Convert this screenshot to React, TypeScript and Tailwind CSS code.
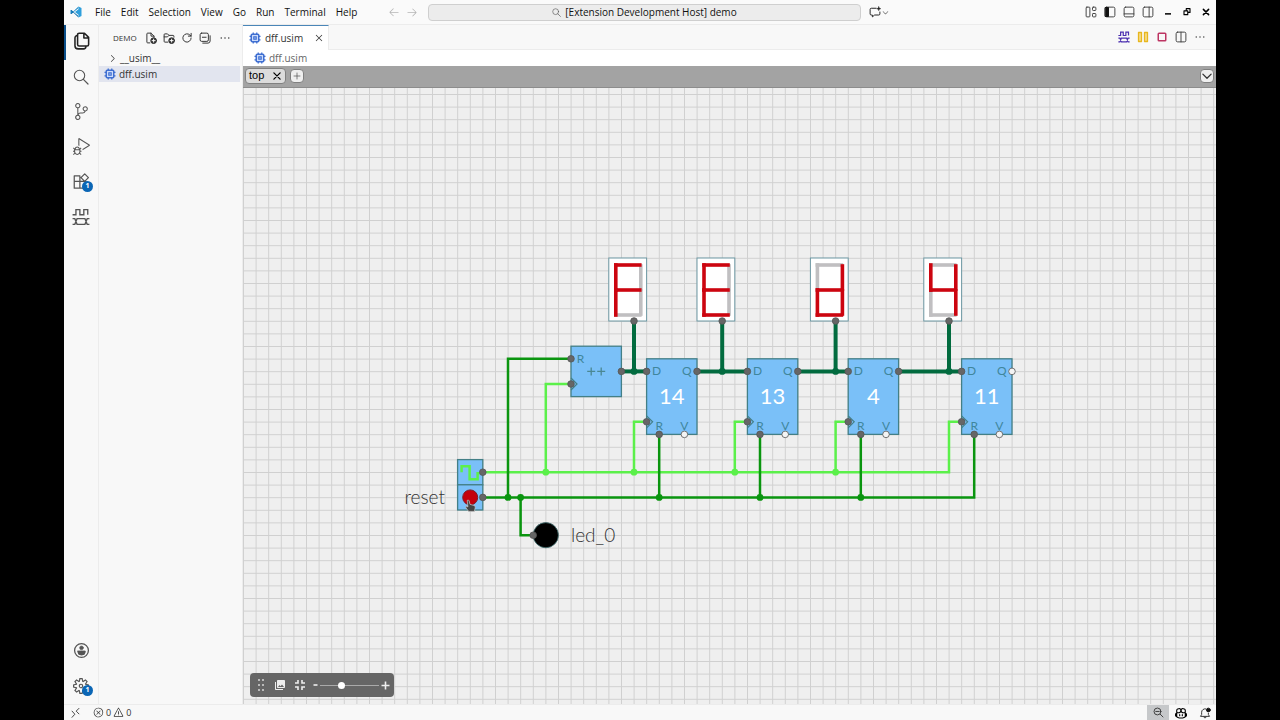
import type { ReactNode } from "react";
import {
  VscArrowLeft,
  VscArrowRight,
  VscChevronDown,
  VscChevronRight,
  VscClose,
  VscCopilot,
  VscDebugAlt,
  VscEllipsis,
  VscError,
  VscSettingsGear,
  VscSourceControl,
  VscWarning,
} from "react-icons/vsc";

const MENU = ["File", "Edit", "Selection", "View", "Go", "Run", "Terminal", "Help"];

function Icon({ size = 12, children }: { size?: number; children: ReactNode }) {
  return (
    <svg
      width={size}
      height={size}
      viewBox="0 0 16 16"
      fill="none"
      stroke="currentColor"
      strokeWidth="1.3"
      strokeLinecap="round"
      strokeLinejoin="round"
      className="shrink-0"
    >
      {children}
    </svg>
  );
}

function VsLogo() {
  return (
    <svg width="12" height="12" viewBox="0 0 24 24">
      <path d="M17 1 L6.5 11 L2.5 8 L1 9 L1 15 L2.5 16 L17 4 Z" fill="#1c88c7" />
      <path d="M17 23 L6.5 13 L2.5 16 L1 15 L4.5 12 L1 9 L2.5 8 L17 20 Z" fill="#0f6fae" />
      <path d="M17 1 L23 4 L23 20 L17 23 L17 17.5 L10 12 L17 6.500 Z" fill="#2f9fdc" />
    </svg>
  );
}

function ChipIcon() {
  return (
    <svg width="12" height="12" viewBox="0 0 24 24" fill="none" stroke="#3f6fd1" strokeWidth="3" className="shrink-0">
      <rect x="4.500" y="4.500" width="15" height="15" rx="2" fill="#cddcfb" />
      <rect x="9.500" y="9.500" width="5" height="5" fill="#8fb0f0" strokeWidth="2" />
      <path d="M8.500 1v3M15.500 1v3M8.500 20v3M15.500 20v3M1 8.500h3M1 15.500h3M20 8.500h3M20 15.500h3" strokeWidth="2.500" />
    </svg>
  );
}

function SearchIcon({ size }: { size: number }) {
  return (
    <Icon size={size}>
      <circle cx="6.500" cy="6.500" r="5.200" strokeWidth="1.100" />
      <path d="M10.400 10.400L15 15" strokeWidth="1.200" />
    </Icon>
  );
}

// two waveforms: a clock on top, a bus below
function WaveIcon({ size = 18, weight = 1.2 }: { size?: number; weight?: number }) {
  return (
    <svg width={size} height={size} viewBox="0 0 16 16" fill="none" stroke="currentColor" strokeWidth={weight}>
      <path d="M.5 6h3v-4.500h3.500v4.500h3.500v-4.500h3.500v4.500" />
      <path d="M.5 9.500h2l2 5h7l2-5h2M.5 14.500h2l2-5h7l2 5h2" />
    </svg>
  );
}

function TitleBar() {
  return (
    <header className="flex h-[25px] shrink-0 items-center border-b border-[#ececec] bg-[#fafafa]">
      <div className="flex flex-1 items-center pl-1.5">
        <VsLogo />
        <nav className="ml-2 flex">
          {MENU.map((label) => (
            <button key={label} className="px-[5px] text-[10px] leading-4 text-[#111]">
              {label}
            </button>
          ))}
        </nav>
      </div>
      <div className="flex items-center">
        <div className="flex w-10 gap-[6px] text-[#b5b5b5]">
          <button aria-label="Go back"><VscArrowLeft size={12} /></button>
          <button aria-label="Go forward"><VscArrowRight size={12} /></button>
        </div>
        <button className="flex h-[17px] w-[433px] items-center justify-center gap-1 rounded border border-[#cfcfcf] bg-[#ececec] text-[10px] text-[#111]">
          <span className="text-[#555]"><SearchIcon size={9} /></span>
          [Extension Development Host] demo
        </button>
        <button aria-label="Chat" className="flex w-[33px] items-center pl-2 text-[#222]">
          <Icon>
            <path d="M9.500 3H3a1.500 1.500 0 0 0-1.500 1.500v6A1.500 1.500 0 0 0 3 12h1.500v2.500L7.500 12H13a1.500 1.500 0 0 0 1.500-1.500V8" />
            <path d="M13 .8l.8 2 2 .8-2 .8-.8 2-.8-2-2-.8 2-.8z" fill="currentColor" strokeWidth=".5" />
          </Icon>
          <VscChevronDown size={9} />
        </button>
      </div>
      <div className="flex flex-1 items-center justify-end gap-[7px] pr-1 text-[#444]">
        <button aria-label="Customize layout">
          <Icon><rect x="1.500" y="1.500" width="5" height="13" rx="1" /><rect x="10" y="1.500" width="4.500" height="4.500" rx="1" /><rect x="10" y="10" width="4.500" height="4.500" rx="1" /></Icon>
        </button>
        <button aria-label="Toggle side bar">
          <Icon><rect x="1.500" y="1.500" width="13" height="13" rx="2" /><path d="M2 2h4v12H2z" fill="#111" stroke="#111" /></Icon>
        </button>
        <button aria-label="Toggle panel">
          <Icon><rect x="1.500" y="1.500" width="13" height="13" rx="2" /><path d="M1.500 10.500h13" /></Icon>
        </button>
        <button aria-label="Toggle secondary side bar">
          <Icon><rect x="1.500" y="1.500" width="13" height="13" rx="2" /><path d="M9.500 1.500v13" /></Icon>
        </button>
        <button aria-label="Minimize" className="ml-px text-black">
          <Icon><path d="M4 10.500h8" strokeWidth="2" strokeLinecap="butt" /></Icon>
        </button>
        <button aria-label="Restore" className="text-black">
          <Icon><path d="M4 6.500h5v5H4zM7 6V3.500h5v5H9.500" strokeWidth="1.500" /></Icon>
        </button>
        <button aria-label="Close" className="text-black">
          <Icon><path d="M4.500 4.500l7 7M11.500 4.500l-7 7" strokeWidth="2" /></Icon>
        </button>
      </div>
    </header>
  );
}

function ActivityButton({ label, badge, active, children }: { label: string; badge?: number; active?: boolean; children: ReactNode }) {
  return (
    <button
      aria-label={label}
      className={`relative flex h-[35px] w-full items-center justify-center border-l-2 pr-0.5 pb-0.5 ${active ? "border-[#0b4f8a] text-[#222]" : "border-transparent text-[#555]"}`}
    >
      {children}
      {badge && (
        <span className="absolute right-[5px] bottom-2 flex size-[11px] items-center justify-center rounded-full bg-[#0b66b5] text-[7px] font-bold text-white">
          {badge}
        </span>
      )}
    </button>
  );
}

function ActivityBar() {
  return (
    <aside className="flex w-[35px] shrink-0 flex-col border-r border-[#ececec] bg-[#f8f8f8]">
      <ActivityButton label="Explorer" active>
        <Icon size={19}>
          <path d="M6 1h4.500l3.500 3.500V10.500a1.300 1.300 0 0 1-1.300 1.300H6a1.300 1.300 0 0 1-1.300-1.300v-8.200A1.300 1.300 0 0 1 6 1zM10 1v4h4" />
          <path d="M4.500 3A2 2 0 0 0 2.500 5v6.500A2.700 2.700 0 0 0 5.200 14.200h4.500a2 2 0 0 0 2-2" />
        </Icon>
      </ActivityButton>
      <ActivityButton label="Search"><SearchIcon size={16} /></ActivityButton>
      <ActivityButton label="Source control"><VscSourceControl size={17} /></ActivityButton>
      <ActivityButton label="Run and debug"><VscDebugAlt size={17} /></ActivityButton>
      <ActivityButton label="Extensions" badge={1}>
        <Icon size={18}>
          <path d="M2 2.500h5v5H2zM2 7.500h5v6H2zM7 7.500h5.500v6H7zM11.300 .8l3.300 3.300-3.300 3.300L8 4.100z" strokeWidth="1.100" />
        </Icon>
      </ActivityButton>
      <ActivityButton label="Simulator"><WaveIcon /></ActivityButton>
      <div className="mt-auto">
        <ActivityButton label="Accounts">
          <Icon size={17}>
            <circle cx="8" cy="8" r="6.500" strokeWidth="1.200" />
            <circle cx="8" cy="5.500" r="1.800" fill="currentColor" strokeWidth=".5" />
            <path d="M4.500 8.500h7v.8a3.500 3 0 0 1-7 0z" fill="currentColor" strokeWidth=".8" />
          </Icon>
        </ActivityButton>
        <ActivityButton label="Manage" badge={1}><VscSettingsGear size={16} /></ActivityButton>
      </div>
    </aside>
  );
}

function Explorer() {
  return (
    <section className="w-36 shrink-0 border-r border-[#ececec] bg-[#f8f8f8] text-[10px] text-[#333]">
      <div className="flex h-[25px] items-center pl-3.5">
        <h2 className="text-[8px]">DEMO</h2>
        <div className="ml-auto flex gap-[6px] pr-[11px]">
          <button aria-label="New file">
            <Icon>
              <path d="M6.500 14.500H3.500a1 1 0 0 1-1-1v-11a1 1 0 0 1 1-1H8l4 4v1.500M8 1.500v4h4" />
              <circle cx="11.500" cy="11.500" r="3.800" fill="#333" stroke="#333" />
              <path d="M11.500 9.500v4M9.500 11.500h4" stroke="#fff" />
            </Icon>
          </button>
          <button aria-label="New folder">
            <Icon>
              <path d="M6.500 13.500H2.500a1 1 0 0 1-1-1v-9a1 1 0 0 1 1-1H6l2 2h5.500a1 1 0 0 1 1 1V7M1.500 6.500H6l2-2" />
              <circle cx="11.500" cy="11.500" r="3.800" fill="#333" stroke="#333" />
              <path d="M11.500 9.500v4M9.500 11.500h4" stroke="#fff" />
            </Icon>
          </button>
          <button aria-label="Refresh">
            <Icon><path d="M13.500 8A5.500 5.500 0 1 1 11.800 4L13.500 5.500M13.500 1.800v3.700H9.800" /></Icon>
          </button>
          <button aria-label="Collapse all">
            <Icon><rect x="1.500" y="1.500" width="11" height="11" rx="2" /><path d="M4.500 7h5M5 14.800h7a2.800 2.800 0 0 0 2.800-2.800V5" /></Icon>
          </button>
          <button aria-label="More actions" className="ml-0.5"><VscEllipsis size={12} /></button>
        </div>
      </div>
      <ul>
        <li className="flex h-4 items-center gap-0.5 pl-2">
          <VscChevronRight size={11} />
          __usim__
        </li>
        <li className="mr-0.5 flex h-4 items-center gap-[3px] bg-[#e2e5ef] pl-[5px]">
          <ChipIcon />
          dff.usim
        </li>
      </ul>
    </section>
  );
}

function EditorHeader() {
  return (
    <>
      <div className="flex h-[25px] shrink-0 border-b border-[#ececec] bg-[#f8f8f8]">
        <div className="-mb-px flex items-center gap-1 border-t border-r border-t-[#4a86b8] border-r-[#ececec] bg-white pr-[3px] pl-1.5 text-[10px] text-[#333]">
          <ChipIcon />
          dff.usim
          <button aria-label="Close tab" className="ml-1.5"><VscClose size={12} /></button>
        </div>
        <div className="ml-auto flex items-center gap-[7px] pr-2.5 text-[#444]">
          <button aria-label="Waveforms" className="text-[#4b2fb0]"><WaveIcon size={12} weight={1.6} /></button>
          <button aria-label="Pause" className="text-[#e8b71f]">
            <Icon><path d="M2 2h4v12H2zM10 2h4v12h-4z" strokeWidth="1.700" fill="#f6dc8a" /></Icon>
          </button>
          <button aria-label="Stop" className="text-[#bd3563]">
            <Icon><rect x="3" y="3" width="10" height="10" rx="1" strokeWidth="2" /></Icon>
          </button>
          <button aria-label="Split editor">
            <Icon><rect x="1.500" y="1.500" width="13" height="13" rx="2" /><path d="M8 1.500v13" /></Icon>
          </button>
          <button aria-label="More actions"><VscEllipsis size={12} /></button>
        </div>
      </div>
      <div className="flex h-4 shrink-0 items-center gap-[3px] bg-white pl-[11px] text-[10px] text-[#666]">
        <ChipIcon />
        dff.usim
      </div>
      <div className="flex h-[22px] shrink-0 items-center gap-1 border-b border-[#8c8c8c] bg-[#a3a3a3] px-0.5 pb-0.5 font-['Liberation_Sans',sans-serif]">
        <div className="flex h-4 items-center gap-2 rounded-sm border border-[#808080] bg-[#dcdcdc] px-[3px] text-[11px] text-black">
          top
          <button aria-label="Close sheet">
            <Icon size={10}><path d="M3 3l10 10M13 3L3 13" strokeWidth="2" /></Icon>
          </button>
        </div>
        <button aria-label="Add sheet" className="flex size-3.5 items-center justify-center rounded-sm border border-[#808080] bg-[#efefef] text-[#444]">
          <Icon size={8}><path d="M8 2v12M2 8h12" /></Icon>
        </button>
        <button aria-label="Sheet list" className="ml-auto flex size-3.5 items-center justify-center rounded-sm border border-[#808080] bg-[#efefef] text-[#333]">
          <Icon size={12}><path d="M2.500 5.500L8 11l5.500-5.500" strokeWidth="1.700" /></Icon>
        </button>
      </div>
    </>
  );
}

// The circuit is placed in whole grid cells
const CELL = 12.6;
const g = (n: number) => n * CELL;

const DARK = "#026b3f";
const GREEN = "#0a950f";
const LIGHT = "#5bf04a";

function Wire({ points, color, width = 2.5 }: { points: number[][]; color: string; width?: number }) {
  return <polyline points={points.map(([x, y]) => `${g(x)},${g(y)}`).join(" ")} fill="none" stroke={color} strokeWidth={width} />;
}

function Joint({ x, y, color }: { x: number; y: number; color: string }) {
  return <circle cx={g(x)} cy={g(y)} r="3.400" fill={color} />;
}

function Port({ x, y, open }: { x: number; y: number; open?: boolean }) {
  return <circle cx={g(x)} cy={g(y)} r="3.300" fill={open ? "#f4f4f4" : "#666"} stroke="#555" strokeWidth=".8" />;
}

function Box({ x, y, w, h }: { x: number; y: number; w: number; h: number }) {
  return <rect x={g(x)} y={g(y)} width={g(w)} height={g(h)} fill="#7ac0f8" stroke="#437f86" strokeWidth="1.300" />;
}

function ClockMark({ x, y }: { x: number; y: number }) {
  return <path d={`M${g(x)} ${g(y) - 6}l6 6l-6 6`} fill="none" stroke="#437f86" strokeWidth="1.200" />;
}

function PinLabel({ x, y, children }: { x: number; y: number; children: string }) {
  return (
    <text x={g(x)} y={g(y) + 4} textAnchor="middle" className="fill-[#3f869c] text-[12px]">
      {children}
    </text>
  );
}

function Register({ x, value, openQ }: { x: number; value: number; openQ?: boolean }) {
  return (
    <g>
      <Box x={x} y={21} w={4} h={6} />
      <ClockMark x={x} y={26} />
      <PinLabel x={x + 0.8} y={22}>D</PinLabel>
      <PinLabel x={x + 3.2} y={22}>Q</PinLabel>
      <PinLabel x={x + 1} y={26.3}>R</PinLabel>
      <PinLabel x={x + 3} y={26.3}>V</PinLabel>
      <text x={g(x + 2)} y={g(24) + 7} textAnchor="middle" className="fill-white text-[22px]">
        {value}
      </text>
      <Port x={x} y={22} />
      <Port x={x + 4} y={22} open={openQ} />
      <Port x={x} y={26} />
      <Port x={x + 1} y={27} />
      <Port x={x + 3} y={27} open />
    </g>
  );
}

const SEGMENTS: Record<string, string> = {
  a: "M7 7H31",
  b: "M32 8V31",
  c: "M32 33V56",
  d: "M7 57H31",
  e: "M7 32V57",
  f: "M7 7V32",
  g: "M7 32H31",
};

function SevenSegment({ x, port, on }: { x: number; port: number; on: string }) {
  const order = Object.keys(SEGMENTS).sort((a, b) => Number(on.includes(a)) - Number(on.includes(b)));
  return (
    <g>
      <rect x={g(x)} y={g(13)} width={g(3)} height={g(5)} fill="#fff" stroke="#6d98a3" />
      <g transform={`translate(${g(x)} ${g(13)})`} strokeWidth="3.600" strokeLinecap="square">
        {order.map((s) => (
          <path key={s} d={SEGMENTS[s]} stroke={on.includes(s) ? "#cc0510" : "#c0bfc1"} />
        ))}
      </g>
      <Port x={port} y={18} />
    </g>
  );
}

function Circuit() {
  return (
    <svg className="block size-full font-[Lato,sans-serif]" role="img" aria-label="dff circuit">
      <defs>
        <pattern id="grid" width={CELL} height={CELL} patternUnits="userSpaceOnUse" x="0" y="6">
          <path d={`M0 .5H${CELL}M.5 0V${CELL}`} stroke="#d0d0d0" strokeWidth="1" />
        </pattern>
      </defs>
      <rect width="100%" height="100%" fill="#efefef" />
      <rect width="100%" height="100%" fill="url(#grid)" />
      <g transform="translate(0.4 6.2)">
        <Box x={17} y={29} w={2} h={2} />
        <Box x={17} y={31} w={2} h={2} />
        <Box x={26} y={20} w={4} h={4} />
        <ClockMark x={26} y={23} />
        <PinLabel x={26.75} y={21}>R</PinLabel>
        <path d={`M${g(28) - 9} ${g(22)}h8M${g(28) - 5} ${g(22) - 4}v8M${g(28) + 1} ${g(22)}h8M${g(28) + 5} ${g(22) - 4}v8`} stroke="#4a8792" strokeWidth="1.300" />

        <Wire color={LIGHT} points={[[19, 30], [56, 30], [56, 26], [57, 26]]} />
        <Wire color={LIGHT} points={[[24, 30], [24, 23], [26, 23]]} />
        {[31, 39, 47].map((x) => (
          <Wire key={x} color={LIGHT} points={[[x, 30], [x, 26], [x + 1, 26]]} />
        ))}
        {[24, 31, 39, 47].map((x) => <Joint key={x} x={x} y={30} color={LIGHT} />)}

        <Wire color={GREEN} points={[[19, 32], [58, 32], [58, 27]]} />
        <Wire color={GREEN} points={[[21, 32], [21, 21], [26, 21]]} />
        <Wire color={GREEN} points={[[22, 32], [22, 35], [23, 35]]} />
        {[33, 41, 49].map((x) => <Wire key={x} color={GREEN} points={[[x, 27], [x, 32]]} />)}
        {[21, 22, 33, 41, 49].map((x) => <Joint key={x} x={x} y={32} color={GREEN} />)}

        {[[30, 32, 31], [36, 40, 38], [44, 48, 47], [52, 57, 56]].map(([from, to, tap]) => (
          <g key={tap}>
            <Wire color={DARK} width={4} points={[[from, 22], [to, 22]]} />
            <Wire color={DARK} width={4} points={[[tap, 18], [tap, 22]]} />
            <Joint x={tap} y={22} color={DARK} />
          </g>
        ))}

        <SevenSegment x={29} port={31} on="aefg" />
        <SevenSegment x={36} port={38} on="adefg" />
        <SevenSegment x={45} port={47} on="bcdeg" />
        <SevenSegment x={54} port={56} on="bcfg" />

        <Register x={32} value={14} />
        <Register x={40} value={13} />
        <Register x={48} value={4} />
        <Register x={57} value={11} openQ />

        <path d={`M${g(17) + 4} ${g(30)}v-6h8v13h8v-6h2`} fill="none" stroke={LIGHT} strokeWidth="2.500" />
        <circle cx={g(18)} cy={g(32)} r="7.500" fill="#c4000c" stroke="#7d1c28" />
        <circle cx={g(24)} cy={g(35)} r="12.600" fill="#000" stroke="#3f6f70" strokeWidth=".8" />
        <Port x={19} y={30} />
        <Port x={19} y={32} />
        <Port x={26} y={21} />
        <Port x={26} y={23} />
        <Port x={30} y={22} />
        <Port x={23} y={35} />

        <text x={g(16)} y={g(32) + 7} textAnchor="end" className="fill-[#333] text-[19px] font-light">reset</text>
        <text x={g(26)} y={g(35) + 7} className="fill-[#333] text-[19px] font-light">led_0</text>

        {/* pointer over the reset button */}
        <path
          transform={`translate(${g(18) - 5} ${g(32) + 2})`}
          d="M2 1q1.400-1 2 .5l.8 3.500l4 1q1.600.6 1.200 2.300l-.8 3.700H3.500L.8 8.500q-.8-1.600.7-1.600l1.200.6z"
          fill="#444"
          stroke="#ccc"
          strokeWidth=".7"
        />
      </g>
    </svg>
  );
}

function CanvasToolbar() {
  return (
    <div className="absolute bottom-[7px] left-[7px] flex h-6 w-36 items-center rounded bg-[#666] px-1.5 text-[#eee] [&_svg]:shrink-0">
      <svg width="10" height="14" viewBox="0 0 10 14" fill="#bbb">
        {[1, 6, 11].map((y) => (
          <g key={y}>
            <rect x="2" y={y} width="2" height="2" />
            <rect x="6" y={y} width="2" height="2" />
          </g>
        ))}
      </svg>
      <button aria-label="Save image" className="ml-2">
        <svg width="12" height="12" viewBox="0 0 24 24" fill="currentColor">
          <path d="M22 16V4c0-1.100-.9-2-2-2H8c-1.100 0-2 .9-2 2v12c0 1.100.9 2 2 2h12c1.100 0 2-.9 2-2zm-11-4l2.030 2.710L16 11l4 5H8l3-4zM2 6v14c0 1.100.9 2 2 2h14v-2H4V6H2z" />
        </svg>
      </button>
      <button aria-label="Fit to view" className="ml-2">
        <svg width="12" height="12" viewBox="0 0 12 12" fill="none" stroke="currentColor" strokeWidth="1.600">
          <path d="M1 4h3V1M8 1v3h3M1 8h3v3M11 8H8v3" />
        </svg>
      </button>
      <button aria-label="Zoom out" className="ml-[7px]">
        <svg width="5" height="10" viewBox="0 0 5 10"><path d="M.5 5h4" stroke="currentColor" strokeWidth="1.600" /></svg>
      </button>
      <input
        type="range"
        aria-label="Zoom"
        min="0"
        max="100"
        defaultValue="34"
        className="mx-0.5 h-2 min-w-0 flex-1 appearance-none bg-transparent [&::-webkit-slider-runnable-track]:h-px [&::-webkit-slider-runnable-track]:bg-[#aaa] [&::-webkit-slider-thumb]:-mt-[3px] [&::-webkit-slider-thumb]:size-[7px] [&::-webkit-slider-thumb]:appearance-none [&::-webkit-slider-thumb]:rounded-full [&::-webkit-slider-thumb]:bg-white"
      />
      <button aria-label="Zoom in" className="-mr-0.5">
        <svg width="9" height="9" viewBox="0 0 9 9"><path d="M.5 4.500h8M4.500 .5v8" stroke="currentColor" strokeWidth="1.600" /></svg>
      </button>
    </div>
  );
}

function StatusBar() {
  return (
    <footer className="flex h-4 shrink-0 items-center border-t border-[#ececec] bg-[#f8f8f8] text-[9px] text-[#333]">
      <button aria-label="Remote" className="ml-1.5">
        <Icon size={11}><path d="M3 6l4 4.500L3 15M13 2L9 6L13 10" /></Icon>
      </button>
      <button className="ml-3 flex items-center gap-0.5">
        <VscError size={11} /> 0 <VscWarning size={11} /> 0
      </button>
      <div className="ml-auto flex h-full items-center pr-[5px]">
        <button aria-label="Reset zoom" className="flex h-full w-[22px] items-center justify-center bg-[#c6c8ca]">
          <Icon size={11}><circle cx="6.500" cy="6.500" r="5" /><path d="M10.500 10.500l4 4M4 6.500h5" /></Icon>
        </button>
        <button aria-label="Copilot" className="ml-1.5 text-black"><VscCopilot size={12} /></button>
        <button aria-label="Notifications" className="ml-3 text-[#333]">
          <Icon><path d="M9 2.500A4.500 4.500 0 0 0 3.500 7v3L2 12.500h12L12.500 10V8.500M6.500 13a1.500 1.500 0 0 0 3 0" /><circle cx="12.500" cy="4" r="2.500" fill="#111" stroke="#111" /></Icon>
        </button>
      </div>
    </footer>
  );
}

export default function App() {
  return (
    <div className="h-screen bg-black px-16 font-['Open_Sans','Noto_Sans',sans-serif]">
      <div className="flex h-full flex-col overflow-hidden bg-[#f8f8f8]">
        <TitleBar />
        <div className="flex min-h-0 flex-1">
          <ActivityBar />
          <Explorer />
          <main className="flex min-w-0 flex-1 flex-col">
            <EditorHeader />
            <div className="relative min-h-0 flex-1 overflow-hidden">
              <Circuit />
              <CanvasToolbar />
            </div>
          </main>
        </div>
        <StatusBar />
      </div>
    </div>
  );
}
